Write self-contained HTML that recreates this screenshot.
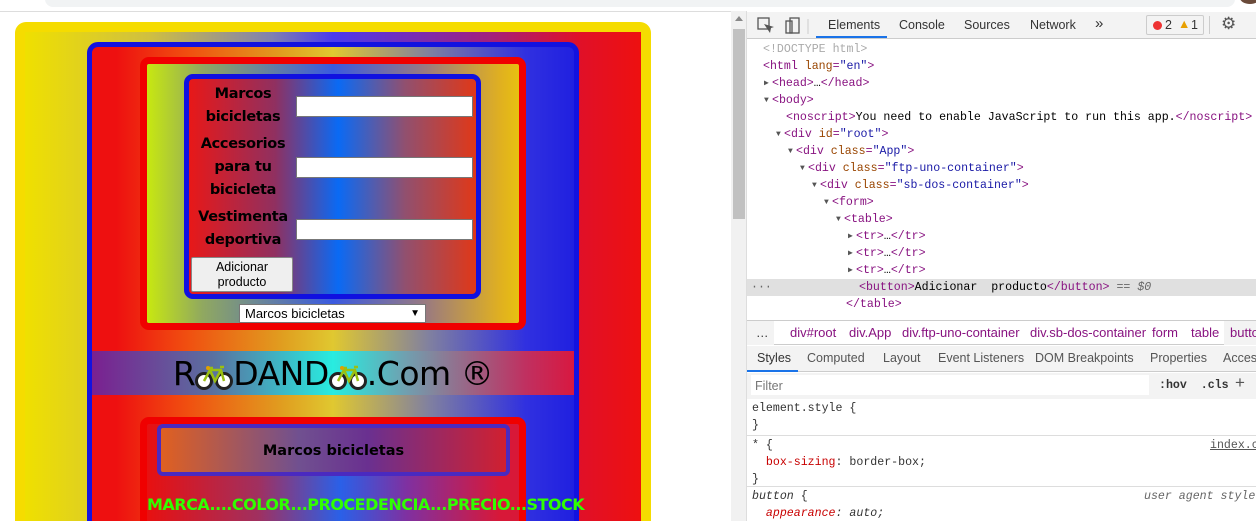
<!DOCTYPE html>
<html style="width:1256px;height:521px;overflow:hidden"><head><meta charset="utf-8">
<style>
*{box-sizing:border-box;margin:0;padding:0}
body{width:1256px;height:521px;overflow:hidden;background:#fff;font-family:"Liberation Sans",sans-serif;position:relative}
#wrap{position:absolute;left:0;top:0;width:1256px;height:521px;overflow:hidden}
.abs{position:absolute}
.lab{font-family:"DejaVu Sans",sans-serif;font-weight:bold;font-size:14.5px;line-height:23px;color:#000;text-align:center;letter-spacing:-0.3px}
.inp{position:absolute;background:#fff;border:1px solid #777;height:21px;width:177px;left:296px}
.dt{font-family:"Liberation Mono",monospace;font-size:11.6px;line-height:17px;white-space:pre;position:absolute}
.tg{color:#881280}.at{color:#994500}.av{color:#1a1aa6}.gr{color:#aaa}
.ui{font-family:"Liberation Sans",sans-serif;font-size:12.5px;color:#333;position:absolute;white-space:nowrap}
.bc{font-family:"Liberation Sans",sans-serif;font-size:13px;color:#881280;position:absolute;top:325px;white-space:nowrap}
.st{font-family:"Liberation Sans",sans-serif;font-size:12.5px;color:#555;position:absolute;top:351px;white-space:nowrap}
.tri{color:#555;font-size:8px;display:inline-block;width:8px;vertical-align:1px}
</style></head><body><div id="wrap">
<div class="abs" style="left:45px;top:-10px;width:1190px;height:17px;background:#f1f3f4;border-radius:8px"></div>
<div class="abs" style="left:0;top:11px;width:731px;height:1px;background:#ddd"></div>
<div class="abs" style="left:1240px;top:-8px;width:20px;height:12px;border-radius:50%;background:#6a4a3a"></div>

<div class="abs" style="left:15px;top:22px;width:636px;height:520px;background:#f5dc00;border-radius:11px"></div>
<div class="abs" style="left:25px;top:32px;width:616px;height:500px;background:linear-gradient(90deg,#efe000 0%,#d0c040 20%,#8080b0 40%,#4a3aee 50%,#a02080 75%,#e01028 90%,#ee1010 100%)"></div>
<div class="abs" style="left:87px;top:42px;width:492px;height:500px;border:5px solid #1212e0;border-radius:11px;background:linear-gradient(90deg,#ee1010 0%,#ee1010 5%,#f05010 20%,#e0a020 40%,#e0c830 50%,#8080a0 70%,#3030e0 90%,#2020e0 100%)"></div>
<div class="abs" style="left:140px;top:57px;width:386px;height:273px;border:7px solid #f00000;border-radius:9px;background:linear-gradient(90deg,#c8e810 0%,#90a860 15%,#3a5ae0 50%,#9a7a80 75%,#e0b020 95%,#e8c010 100%)"></div>
<div class="abs" style="left:184px;top:74px;width:297px;height:225px;border:5px solid #1010e0;border-radius:9px;background:linear-gradient(90deg,#e81818 0%,#903060 30%,#0a6af4 52%,#905070 75%,#e03818 100%)"></div>
<div class="abs lab" style="left:193px;top:83px;width:100px">Marcos<br>bicicletas</div>
<div class="abs lab" style="left:193px;top:133px;width:100px">Accesorios<br>para tu<br>bicicleta</div>
<div class="abs lab" style="left:190px;top:206px;width:106px">Vestimenta<br>deportiva</div>
<div class="inp" style="top:96px"></div>
<div class="inp" style="top:157px"></div>
<div class="inp" style="top:219px"></div>
<div class="abs" style="left:191px;top:257px;width:102px;height:35px;background:#efefef;border:1px solid #888;border-radius:2px;font-size:12.5px;line-height:15px;text-align:center;padding-top:2px;color:#000">Adicionar<br>producto</div>
<div class="abs" style="left:239px;top:304px;width:187px;height:19px;background:#fff;border:1px solid #777;font-size:13px;line-height:17px;padding-left:5px;color:#000">Marcos bicicletas<span style="position:absolute;right:5px;top:0;font-size:10px">&#9660;</span></div>
<div class="abs" style="left:92px;top:351px;width:482px;height:44px;background:linear-gradient(90deg,#7a2090 0%,#5a70a0 25%,#28ece0 50%,#70a0b0 65%,#c03060 90%,#d81840 100%)"></div>
<div class="abs" style="left:92px;top:351px;width:482px;height:44px;text-align:center;font-family:'DejaVu Sans',sans-serif;font-size:33px;line-height:46px;color:#000;letter-spacing:-0.5px;white-space:nowrap">R<svg width="38" height="26" viewBox="0 0 38 26" style="vertical-align:-5px"><circle cx="9" cy="17" r="7.5" fill="#fff" stroke="#222" stroke-width="3"/><circle cx="29" cy="17" r="7.5" fill="#fff" stroke="#222" stroke-width="3"/><path d="M9 17 L15 6 L26 6 L29 17 M15 6 L20 17 L26 6 M13 4 L18 4 M25 3 L29 3" stroke="#9ac010" stroke-width="2.5" fill="none"/><circle cx="13" cy="4" r="2" fill="#e0a000"/></svg>DAND<svg width="38" height="26" viewBox="0 0 38 26" style="vertical-align:-5px"><circle cx="9" cy="17" r="7.5" fill="#fff" stroke="#222" stroke-width="3"/><circle cx="29" cy="17" r="7.5" fill="#fff" stroke="#222" stroke-width="3"/><path d="M9 17 L15 6 L26 6 L29 17 M15 6 L20 17 L26 6 M13 4 L18 4 M25 3 L29 3" stroke="#9ac010" stroke-width="2.5" fill="none"/><circle cx="13" cy="4" r="2" fill="#e0a000"/></svg>.Com &reg;</div>
<div class="abs" style="left:140px;top:417px;width:386px;height:130px;border:7px solid #f00000;border-radius:9px;background:linear-gradient(90deg,#e81010 0%,#a03060 30%,#2a60e8 52%,#8030a0 70%,#d81838 95%)"></div>
<div class="abs" style="left:157px;top:424px;width:353px;height:52px;border:4px solid #4a2ac0;border-radius:6px;background:linear-gradient(90deg,#e06020 0%,#705090 40%,#6a3090 60%,#d02030 100%)"></div>
<div class="abs" style="left:157px;top:424px;width:353px;height:52px;line-height:54px;text-align:center;font-family:'DejaVu Sans',sans-serif;font-weight:bold;font-size:14.5px;color:#000">Marcos bicicletas</div>
<div class="abs" style="left:147px;top:495px;font-family:'DejaVu Sans',sans-serif;font-weight:bold;font-size:16px;color:#30ff00;letter-spacing:-0.5px;white-space:nowrap">MARCA....COLOR...PROCEDENCIA...PRECIO...STOCK</div>

<div class="abs" style="left:731px;top:11px;width:525px;height:510px;background:#fff"></div>
<div class="abs" style="left:731px;top:11px;width:16px;height:510px;background:#f1f1f1;border-right:1px solid #ddd"></div>
<div class="abs" style="left:733px;top:29px;width:12px;height:190px;background:#c1c1c1"></div>
<div class="abs" style="left:735px;top:16px;width:0;height:0;border-left:4px solid transparent;border-right:4px solid transparent;border-bottom:5px solid #888"></div>
<div class="abs" style="left:747px;top:12px;width:509px;height:27px;background:#f3f3f3;border-bottom:1px solid #ccc"></div>
<svg class="abs" style="left:757px;top:17px" width="60" height="18"><rect x="1" y="1" width="11" height="11" fill="none" stroke="#555" stroke-width="1.3"/><path d="M7 7 L13 16 L14 11 L17 10 Z" fill="#555"/><rect x="29" y="4" width="6" height="12" fill="none" stroke="#555" stroke-width="1.3"/><rect x="33" y="1" width="9" height="15" fill="none" stroke="#555" stroke-width="1.3"/><line x1="51" y1="2" x2="51" y2="17" stroke="#ccc"/></svg>
<div class="ui" style="left:828px;top:18px;color:#333">Elements</div>
<div class="abs" style="left:816px;top:36px;width:71px;height:2px;background:#1a73e8"></div>
<div class="ui" style="left:899px;top:18px">Console</div>
<div class="ui" style="left:964px;top:18px">Sources</div>
<div class="ui" style="left:1030px;top:18px">Network</div>
<div class="ui" style="left:1095px;top:15px;font-size:15px">&raquo;</div>
<div class="abs" style="left:1146px;top:15px;width:58px;height:20px;border:1px solid #ccc;border-radius:2px"></div>
<div class="abs" style="left:1153px;top:21px;width:9px;height:9px;border-radius:50%;background:#e33"></div>
<div class="ui" style="left:1165px;top:18px">2</div>
<div class="ui" style="left:1178px;top:17px;color:#e8a000">&#9650;</div>
<div class="ui" style="left:1191px;top:18px">1</div>
<div class="abs" style="left:1209px;top:16px;width:1px;height:18px;background:#ccc"></div>
<div class="ui" style="left:1221px;top:14px;font-size:17px;color:#555">&#9881;</div>

<div class="dt gr" style="left:763px;top:41px">&lt;!DOCTYPE html&gt;</div>
<div class="dt" style="left:763px;top:58px"><span class="tg">&lt;html </span><span class="at">lang</span><span class="tg">=</span><span class="av">"en"</span><span class="tg">&gt;</span></div>
<div class="dt" style="left:764px;top:75px"><span class="tri">&#9654;</span><span class="tg">&lt;head&gt;</span>…<span class="tg">&lt;/head&gt;</span></div>
<div class="dt" style="left:764px;top:92px"><span class="tri">&#9660;</span><span class="tg">&lt;body&gt;</span></div>
<div class="dt" style="left:786px;top:109px"><span class="tg">&lt;noscript&gt;</span>You need to enable JavaScript to run this app.<span class="tg">&lt;/noscript&gt;</span></div>
<div class="dt" style="left:776px;top:126px"><span class="tri">&#9660;</span><span class="tg">&lt;div </span><span class="at">id</span><span class="tg">=</span><span class="av">"root"</span><span class="tg">&gt;</span></div>
<div class="dt" style="left:788px;top:143px"><span class="tri">&#9660;</span><span class="tg">&lt;div </span><span class="at">class</span><span class="tg">=</span><span class="av">"App"</span><span class="tg">&gt;</span></div>
<div class="dt" style="left:800px;top:160px"><span class="tri">&#9660;</span><span class="tg">&lt;div </span><span class="at">class</span><span class="tg">=</span><span class="av">"ftp-uno-container"</span><span class="tg">&gt;</span></div>
<div class="dt" style="left:812px;top:177px"><span class="tri">&#9660;</span><span class="tg">&lt;div </span><span class="at">class</span><span class="tg">=</span><span class="av">"sb-dos-container"</span><span class="tg">&gt;</span></div>
<div class="dt" style="left:824px;top:194px"><span class="tri">&#9660;</span><span class="tg">&lt;form&gt;</span></div>
<div class="dt" style="left:836px;top:211px"><span class="tri">&#9660;</span><span class="tg">&lt;table&gt;</span></div>
<div class="dt" style="left:848px;top:228px"><span class="tri">&#9654;</span><span class="tg">&lt;tr&gt;</span>…<span class="tg">&lt;/tr&gt;</span></div>
<div class="dt" style="left:848px;top:245px"><span class="tri">&#9654;</span><span class="tg">&lt;tr&gt;</span>…<span class="tg">&lt;/tr&gt;</span></div>
<div class="dt" style="left:848px;top:262px"><span class="tri">&#9654;</span><span class="tg">&lt;tr&gt;</span>…<span class="tg">&lt;/tr&gt;</span></div>
<div class="abs" style="left:747px;top:279px;width:509px;height:17px;background:#e0e0e0"></div>
<div class="dt" style="left:751px;top:279px;color:#666">···</div>
<div class="dt" style="left:859px;top:279px"><span class="tg">&lt;button&gt;</span>Adicionar  producto<span class="tg">&lt;/button&gt;</span> <span style="color:#666">== <i>$0</i></span></div>
<div class="dt" style="left:846px;top:296px"><span class="tg">&lt;/table&gt;</span></div>
<div class="abs" style="left:747px;top:320px;width:509px;height:1px;background:#ccc"></div>
<div class="abs" style="left:747px;top:321px;width:509px;height:24px;background:#fff;border-bottom:1px solid #ccc"></div>
<div class="abs" style="left:747px;top:321px;width:27px;height:24px;background:#f3f3f3"></div>
<div class="ui" style="left:756px;top:326px">…</div>
<div class="bc" style="left:790px">div#root</div>
<div class="bc" style="left:849px">div.App</div>
<div class="bc" style="left:902px">div.ftp-uno-container</div>
<div class="bc" style="left:1030px">div.sb-dos-container</div>
<div class="bc" style="left:1152px">form</div>
<div class="bc" style="left:1191px">table</div>
<div class="abs" style="left:1224px;top:321px;width:32px;height:24px;background:#f3f3f3"></div>
<div class="bc" style="left:1230px">butto</div>
<div class="abs" style="left:747px;top:346px;width:509px;height:26px;background:#f3f3f3;border-bottom:1px solid #ccc"></div>
<div class="st" style="left:757px;color:#333">Styles</div>
<div class="abs" style="left:747px;top:370px;width:51px;height:2px;background:#1a73e8"></div>
<div class="st" style="left:807px">Computed</div>
<div class="st" style="left:883px">Layout</div>
<div class="st" style="left:938px">Event Listeners</div>
<div class="st" style="left:1035px">DOM Breakpoints</div>
<div class="st" style="left:1150px">Properties</div>
<div class="st" style="left:1223px">Access</div>
<div class="abs" style="left:747px;top:373px;width:509px;height:26px;background:#f3f3f3"></div>
<div class="abs" style="left:751px;top:375px;width:398px;height:20px;background:#fff"></div>
<div class="ui" style="left:755px;top:379px;color:#777">Filter</div>
<div class="dt" style="left:1159px;top:377px;color:#333;font-weight:bold">:hov  .cls</div>
<div class="ui" style="left:1235px;top:373px;font-size:17px;color:#555">+</div>
<div class="dt" style="left:752px;top:400px;color:#333">element.style {
}</div>
<div class="abs" style="left:747px;top:435px;width:509px;height:1px;background:#ddd"></div>
<div class="dt" style="left:752px;top:437px;color:#333">* {
  <span style="color:#c80000">box-sizing</span>: border-box;
}</div>
<div class="dt" style="left:1210px;top:437px;color:#555;text-decoration:underline">index.c</div>
<div class="abs" style="left:747px;top:486px;width:509px;height:1px;background:#ddd"></div>
<div class="dt" style="left:752px;top:488px;color:#333"><i>button</i> {
  <i><span style="color:#c80000">appearance</span>: auto;</i></div>
<div class="dt" style="left:1144px;top:488px;color:#666"><i>user agent styles</i></div>
</div></body></html>
